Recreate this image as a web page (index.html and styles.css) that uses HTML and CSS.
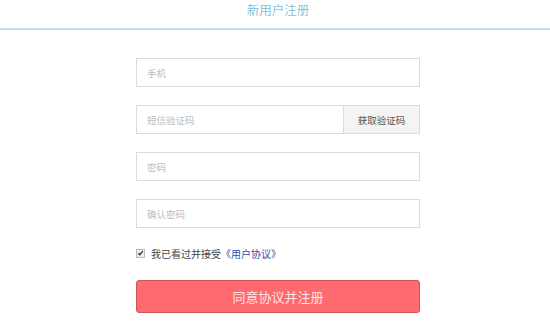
FILE: index.html
```html
<!DOCTYPE html>
<html lang="zh-CN">
<head>
<meta charset="utf-8">
<title>新用户注册</title>
<link rel="stylesheet" href="styles.css">
</head>
<body>
<header class="header">
  <h1 class="title">新用户注册</h1>
</header>
<form class="form">
  <div class="field"><input class="input" type="text" placeholder="手机"></div>
  <div class="field field-split">
    <input class="input" type="text" placeholder="短信验证码">
    <button class="code-btn" type="button">获取验证码</button>
  </div>
  <div class="field"><input class="input" type="password" placeholder="密码"></div>
  <div class="field"><input class="input" type="password" placeholder="确认密码"></div>
  <label class="agree">
    <span class="check"><svg viewBox="0 0 8 8" width="8" height="8"><path d="M1.5 4.2 L3.2 5.9 L6.6 1.8" fill="none" stroke="#333" stroke-width="1.6"/></svg></span>
    <span>我已看过并接受<a class="link" href="#">《用户协议》</a></span>
  </label>
  <button class="submit" type="button">同意协议并注册</button>
</form>
</body>
</html>
```
FILE: styles.css
```css
* { box-sizing: border-box; }
body {
  margin: 0;
  background: #fff;
  font-family: "Noto Sans CJK SC", "Noto Sans", sans-serif;
}
.header {
  height: 30px;
  border-bottom: 2px solid #b8e0e8;
  display: flex;
  justify-content: center;
}
.title {
  margin: 0;
  padding-left: 6px;
  font-size: 12.5px;
  font-weight: 300;
  line-height: 20px;
  color: #4aa6c8;
}
.form {
  width: 290px;
  padding-left: 6px;
  margin: 28px auto 0;
  display: flex;
  flex-direction: column;
}
.field {
  height: 29px;
  border: 1px solid #dcdcdc;
  margin-bottom: 18px;
  display: flex;
  background: #fff;
}
.input {
  flex: 1;
  min-width: 0;
  border: 0;
  outline: none;
  padding: 0 10px;
  font-family: inherit;
  font-size: 9.5px;
  color: #333;
  background: transparent;
}
.input::placeholder { color: #bdbdbd; }
.code-btn {
  width: 76px;
  border: 0;
  border-left: 1px solid #dcdcdc;
  background: #f4f4f4;
  font-family: inherit;
  font-size: 9.5px;
  color: #555;
  padding: 0;
}
.agree {
  display: flex;
  align-items: center;
  gap: 6px;
  height: 14px;
  font-size: 10px;
  color: #444;
}
.check {
  width: 9px;
  height: 9px;
  border: 1px solid #bbb;
  background: #eee;
  display: flex;
  align-items: center;
  justify-content: center;
}
.link { color: #2a4fa8; text-decoration: none; }
.submit {
  margin-top: 20px;
  height: 33px;
  border: 1px solid #c9565c;
  border-radius: 3px;
  background: #ff6a70;
  color: #fde3e3;
  font-family: inherit;
  font-size: 13px;
  padding: 0;
}
```
